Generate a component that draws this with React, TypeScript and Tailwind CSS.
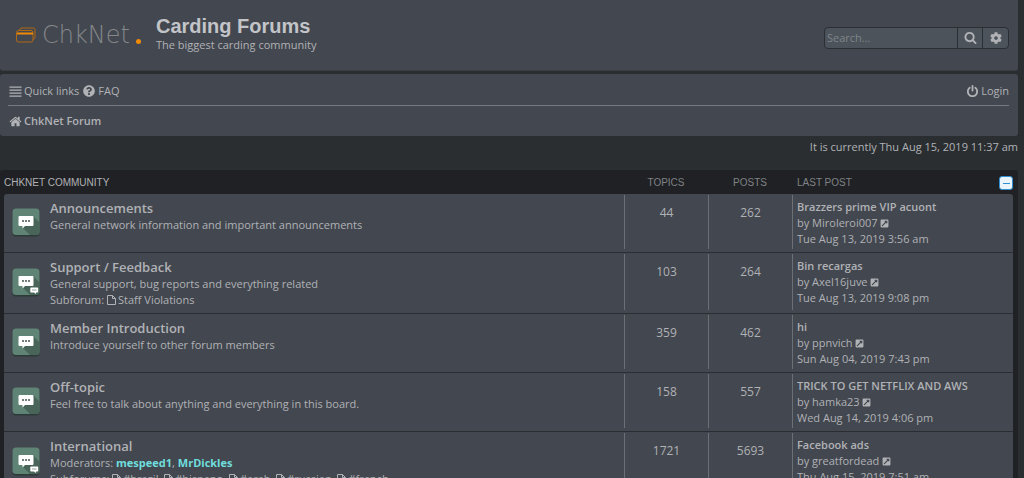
import type { ReactNode } from "react";
import { FaCog, FaExternalLinkSquareAlt, FaQuestionCircle } from "react-icons/fa";

type Forum = {
  title: string;
  description?: string;
  moderators?: string[];
  subforums?: string[];
  topics: number;
  posts: number;
  last: { title: string; author: string; date: string };
};

const forums: Forum[] = [
  {
    title: "Announcements",
    description: "General network information and important announcements",
    topics: 44,
    posts: 262,
    last: { title: "Brazzers prime VIP acuont", author: "Miroleroi007", date: "Tue Aug 13, 2019 3:56 am" },
  },
  {
    title: "Support / Feedback",
    description: "General support, bug reports and everything related",
    subforums: ["Staff Violations"],
    topics: 103,
    posts: 264,
    last: { title: "Bin recargas", author: "Axel16juve", date: "Tue Aug 13, 2019 9:08 pm" },
  },
  {
    title: "Member Introduction",
    description: "Introduce yourself to other forum members",
    topics: 359,
    posts: 462,
    last: { title: "hi", author: "ppnvich", date: "Sun Aug 04, 2019 7:43 pm" },
  },
  {
    title: "Off-topic",
    description: "Feel free to talk about anything and everything in this board.",
    topics: 158,
    posts: 557,
    last: { title: "TRICK TO GET NETFLIX AND AWS", author: "hamka23", date: "Wed Aug 14, 2019 4:06 pm" },
  },
  {
    title: "International",
    moderators: ["mespeed1", "MrDickles"],
    subforums: ["#brazil", "#hispano", "#arab", "#russian", "#french"],
    topics: 1721,
    posts: 5693,
    last: { title: "Facebook ads", author: "greatfordead", date: "Thu Aug 15, 2019 7:51 am" },
  },
];

const rowGrid = "grid grid-cols-[minmax(0,1fr)_84px_84px_221px]";

// Older solid glyphs, all on a 1792 unit square
const glyphs = {
  bars: "M64 192h1664v192H64zM64 608h1664v192H64zM64 1024h1664v192H64zM64 1440h1664v192H64z",
  home: "M1472 992v480q0 26-19 45t-45 19h-384v-384h-256v384h-384q-26 0-45-19t-19-45v-480q0-1 .5-3t.5-3l575-474 575 474q1 2 1 6zm223-69l-62 74q-8 9-21 11h-3q-13 0-21-7l-692-577-692 577q-12 8-24 7-13-2-21-11l-62-74q-8-10-7-23.500t11-21.500l719-599q32-26 76-26t76 26l244 204v-195q0-14 9-23t23-9h192q14 0 23 9t9 23v408l219 182q10 8 11 21.500t-7 23.500z",
  power:
    "M1664 896q0 156-61 298t-164 245-245 164-298 61-298-61-245-164-164-245-61-298q0-182 80.500-343t226.500-270q43-32 95.500-25t83.500 50q32 42 24.500 94.500t-49.500 84.500q-98 74-151.500 181t-53.500 228q0 104 40.500 198.500t109.500 163.500 163.500 109.500 198.500 40.500 198.500-40.500 163.500-109.500 109.500-163.500 40.500-198.500q0-121-53.500-228t-151.500-181q-42-32-49.500-84.500t24.500-94.500q31-43 84-50t95 25q146 109 226.500 270t80.500 343zm-640-768v640q0 52-38 90t-90 38-90-38-38-90v-640q0-52 38-90t90-38 90 38 38 90z",
  search:
    "M1216 832q0-185-131.500-316.500t-316.500-131.500-316.500 131.500-131.500 316.500 131.500 316.500 316.500 131.500 316.500-131.500 131.500-316.500zm512 832q0 52-38 90t-90 38q-54 0-90-38l-343-342q-179 124-399 124-143 0-273.500-55.500t-225-150-150-225-55.500-273.500 55.500-273.500 150-225 225-150 273.500-55.500 273.500 55.500 225 150 150 225 55.500 273.500q0 220-124 399l343 343q37 37 37 90z",
};

function Glyph({ name }: { name: keyof typeof glyphs }) {
  return (
    <svg width="13" height="13" viewBox="0 0 1792 1792" fill="currentColor">
      <path d={glyphs[name]} />
    </svg>
  );
}

function Logo() {
  return (
    <a href="#" className="mt-px flex items-center" aria-label="ChkNet">
      <svg width="20" height="16" viewBox="0 0 20 16" fill="none" stroke="#b06a14">
        <path d="M3 3.500 5 1h12.500c1 0 1.500.6 1.500 1.500v8L17 13" />
        <rect x="0.500" y="3.500" width="16.500" height="11.500" rx="2" />
        <path d="M1 6.500h16" stroke="#ef8b07" strokeWidth="2" />
      </svg>
      <span className="ml-[6px] font-['DejaVu_Sans'] text-[24px] leading-6 font-extralight text-[#85878a]">ChkNet</span>
      <span className="mt-3 ml-[6px] size-[5px] rounded-full bg-[#ef8b07]" />
    </a>
  );
}

// Flat speech bubble on a green tile, with a small second bubble for forums that have children
function ForumIcon({ nested }: { nested: boolean }) {
  return (
    <svg width="28" height="29" viewBox="0 0 28 29" className="shrink-0">
      <rect x="0.500" y="1" width="27" height="27.500" rx="3.500" fill="#2c3a38" />
      <rect x="0.500" y="0.500" width="27" height="26.500" rx="3.500" fill="#5f8374" />
      <path d="M21 8l6.500 6.500V24a3 3 0 0 1-3 3H18l-7-7z" fill="#496559" />
      <path d="M7.500 8h13a1 1 0 0 1 1 1v8a1 1 0 0 1-1 1H13L10.500 20.500V18h-3a1 1 0 0 1-1-1V9a1 1 0 0 1 1-1z" fill="#fff" />
      <g fill="#46564f">
        <circle cx="11" cy="13" r="1" />
        <circle cx="14" cy="13" r="1" />
        <circle cx="17" cy="13" r="1" />
      </g>
      {nested && (
        <>
          <path d="M19 19.500h6.500a.7.7 0 0 1 .7.7v3.600a.7.7 0 0 1-.7.7H24V26l-2-1.500h-3a.7.7 0 0 1-.7-.7v-3.600a.7.7 0 0 1 .7-.7z" fill="#fff" />
          <path d="M20 22h4.500" stroke="#8fa39b" />
        </>
      )}
    </svg>
  );
}

function FileIcon() {
  return (
    <svg width="9" height="10" viewBox="0 0 9 10" fill="none" stroke="currentColor" className="mr-[2px] inline align-[-1px]">
      <path d="M.5.500H5.500l3 3v6h-8zM5.500.500v3h3" />
    </svg>
  );
}

function NavLink({ icon, children }: { icon: ReactNode; children: ReactNode }) {
  return (
    <a href="#" className="flex items-center gap-[2px] hover:text-white">
      {icon}
      {children}
    </a>
  );
}

function ForumRow({ forum }: { forum: Forum }) {
  const { title, description, moderators, subforums, topics, posts, last } = forum;
  const cell = "mt-px mb-[3px] border-l border-[#6b6f76]";
  return (
    <tr className={`${rowGrid} min-h-[59px] border-b border-[#2a2d32]`}>
      <td className="flex gap-[10px] pl-2">
        <div className="flex items-center pb-[2px]">
          <ForumIcon nested={Boolean(subforums)} />
        </div>
        <div className="py-[5px]">
          <a href="#" className="block text-[13px] leading-[18px] font-semibold">{title}</a>
          {description && <p>{description}</p>}
          {moderators && (
            <p>
              Moderators:{" "}
              {moderators.map((name, i) => (
                <span key={name}>
                  {i > 0 && ", "}
                  <a href="#" className="font-bold text-[#70dedd]">{name}</a>
                </span>
              ))}
            </p>
          )}
          {subforums && (
            <p>
              {subforums.length > 1 ? "Subforums: " : "Subforum: "}
              {subforums.map((name, i) => (
                <span key={name}>
                  {i > 0 && ", "}
                  <a href="#">
                    <FileIcon />
                    {name}
                  </a>
                </span>
              ))}
            </p>
          )}
        </div>
      </td>
      <td className={`${cell} pt-2 text-center text-[12px] leading-5`}>{topics}</td>
      <td className={`${cell} pt-2 text-center text-[12px] leading-5`}>{posts}</td>
      <td className={`${cell} pt-1 pl-1`}>
        <a href="#" className="block font-semibold">{last.title}</a>
        <p>
          by <a href="#">{last.author}</a>{" "}
          <a href="#" aria-label="View the latest post">
            <FaExternalLinkSquareAlt className="inline size-[9px] align-[-1px]" />
          </a>
        </p>
        <p>{last.date}</p>
      </td>
    </tr>
  );
}

export default function App() {
  return (
    <div className="min-h-screen bg-[#2a2e31] pr-[6px] font-['Open_Sans',sans-serif] text-[11px] leading-4 text-[#b0b2b6]">
      <header className="flex items-center justify-between rounded-b-[3px] border-b border-[#3a3e44] bg-[#43474f] pt-[14px] pr-[9px] pb-[15px] pl-4">
        <div className="flex items-center">
          <Logo />
          <div className="ml-[15px] pb-[2px]">
            <h1 className="font-['Liberation_Sans',sans-serif] text-[20px] leading-6 font-bold text-[#c2c4c8]">Carding Forums</h1>
            <p className="-mt-px">The biggest carding community</p>
          </div>
        </div>
        <form className="mt-[6px] flex h-[22px] overflow-hidden rounded-[4px] border border-[#2b2e33] bg-[#4d535a]">
          <input
            type="search"
            aria-label="Search for keywords"
            placeholder="Search…"
            className="w-[132px] px-[2px] outline-none placeholder:text-[#7f848a]"
          />
          <button type="button" aria-label="Search" className="flex w-[25px] items-center justify-center border-l border-[#2b2e33]">
            <Glyph name="search" />
          </button>
          <button type="button" aria-label="Advanced search" className="flex w-[26px] items-center justify-center border-l border-[#2b2e33] text-[12px]">
            <FaCog />
          </button>
        </form>
      </header>

      <nav className="mt-[3px] rounded-[3px] bg-[#43474f] pr-[9px] pl-2">
        <div className="flex items-center justify-between border-b border-[#777a81] pt-[9px] pb-[6px]">
          <div className="flex gap-1 pl-px">
            <NavLink icon={<Glyph name="bars" />}>Quick links</NavLink>
            <NavLink icon={<FaQuestionCircle className="mr-px size-3" />}>FAQ</NavLink>
          </div>
          <NavLink icon={<Glyph name="power" />}>Login</NavLink>
        </div>
        <div className="flex py-[7px] pl-px font-semibold">
          <NavLink icon={<Glyph name="home" />}>ChkNet Forum</NavLink>
        </div>
      </nav>

      <p className="mt-[3px] text-right">It is currently Thu Aug 15, 2019 11:37 am</p>

      <main className="mt-[15px] rounded-[3px] bg-[#202124] pr-[5px] pl-1">
        <table className="block w-full">
          <thead className="block font-['Liberation_Sans',sans-serif] text-[10px] text-[#7f8184]">
            <tr className={`${rowGrid} pt-[5px] pb-[3px]`}>
              <th className="text-left font-normal text-[#b0b2b6]">CHKNET COMMUNITY</th>
              <th className="font-normal">TOPICS</th>
              <th className="font-normal">POSTS</th>
              <th className="flex items-center justify-between pl-[5px] font-normal">
                LAST POST
                <button
                  type="button"
                  aria-label="Collapse category"
                  className="flex size-[14px] items-center justify-center rounded-[3px] border border-[#2f8fd0] bg-[#eaf4fb]"
                >
                  <span className="h-px w-[7px] bg-[#2f8fd0]" />
                </button>
              </th>
            </tr>
          </thead>
          <tbody className="block rounded-t-[3px] bg-[#43474f]">
            {forums.map((forum) => (
              <ForumRow key={forum.title} forum={forum} />
            ))}
          </tbody>
        </table>
      </main>
    </div>
  );
}
